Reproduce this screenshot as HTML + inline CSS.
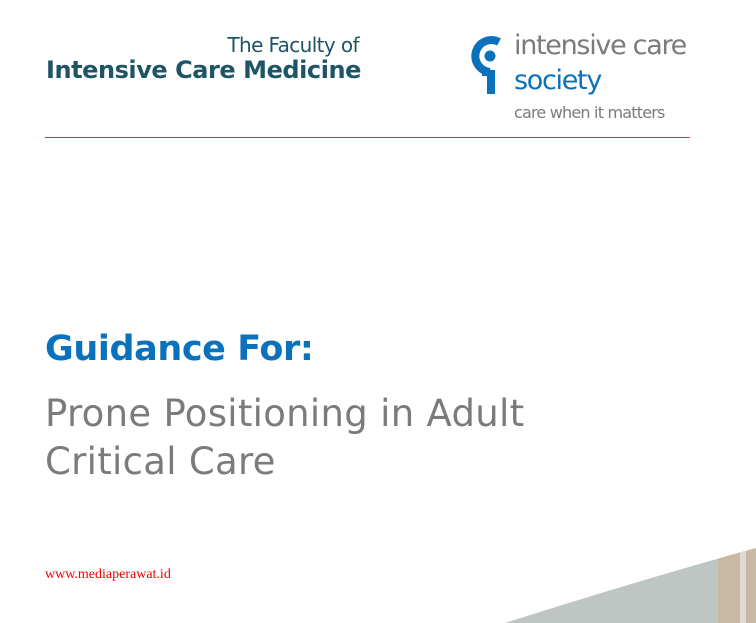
<!DOCTYPE html>
<html><head><meta charset="utf-8"><style>
body{margin:0;width:756px;height:623px;background:#fff;position:relative;overflow:hidden;font-family:"DejaVu Sans","Liberation Sans",sans-serif}
.a{position:absolute;white-space:nowrap}
</style></head><body>
<div class="a" style="right:397px;top:33px;font-size:20px;color:#1e5566;letter-spacing:-0.6px">The Faculty of</div>
<div class="a" style="left:46px;top:56px;font-size:24px;font-weight:bold;color:#1e5566;letter-spacing:-0.45px">Intensive Care Medicine</div>
<svg class="a" style="left:470px;top:34px" width="36" height="62" viewBox="0 0 36 62">
<path d="M29 8 A16 16 0 1 0 20 38" stroke="#0a72bd" stroke-width="8" fill="none"/>
<circle cx="20" cy="22" r="5.5" fill="#0a72bd"/>
<rect x="17" y="36" width="8" height="24" fill="#0a72bd"/>
<rect x="12" y="36" width="13" height="6" fill="#0a72bd"/>
</svg>
<div class="a" style="left:514px;top:30px;font-size:27px;color:#7b7b7b;letter-spacing:-1.3px">intensive care</div>
<div class="a" style="left:514px;top:65px;font-size:27px;color:#0a72bd;letter-spacing:-1.3px">society</div>
<div class="a" style="left:514px;top:103px;font-size:16px;color:#7b7b7b;letter-spacing:-0.8px">care when it matters</div>
<div class="a" style="left:45px;top:137px;width:645px;height:1px;background:#d02a8e"></div>
<div class="a" style="left:45px;top:329px;font-size:35px;font-weight:bold;color:#0a72bd;letter-spacing:-0.4px">Guidance For:</div>
<div class="a" style="left:45px;top:390px;font-size:37px;color:#7b7b7b;line-height:48px;letter-spacing:0.3px">Prone Positioning in Adult<br>Critical Care</div>
<div class="a" style="left:45px;top:567px;font-size:14px;color:#e00;font-family:'Liberation Serif',serif">www.mediaperawat.id</div>
<svg class="a" style="left:0;top:0" width="756" height="623">
<defs><clipPath id="c"><path d="M505 623 Q640 580 756 548 L756 623 Z"/></clipPath></defs>
<g clip-path="url(#c)">
<rect x="500" y="540" width="260" height="90" fill="#bfc5c2"/>
<rect x="718" y="540" width="40" height="90" fill="#c9b9a3"/>
<rect x="740" y="540" width="6" height="90" fill="#dedbd4"/>
</g></svg>
</body></html>
